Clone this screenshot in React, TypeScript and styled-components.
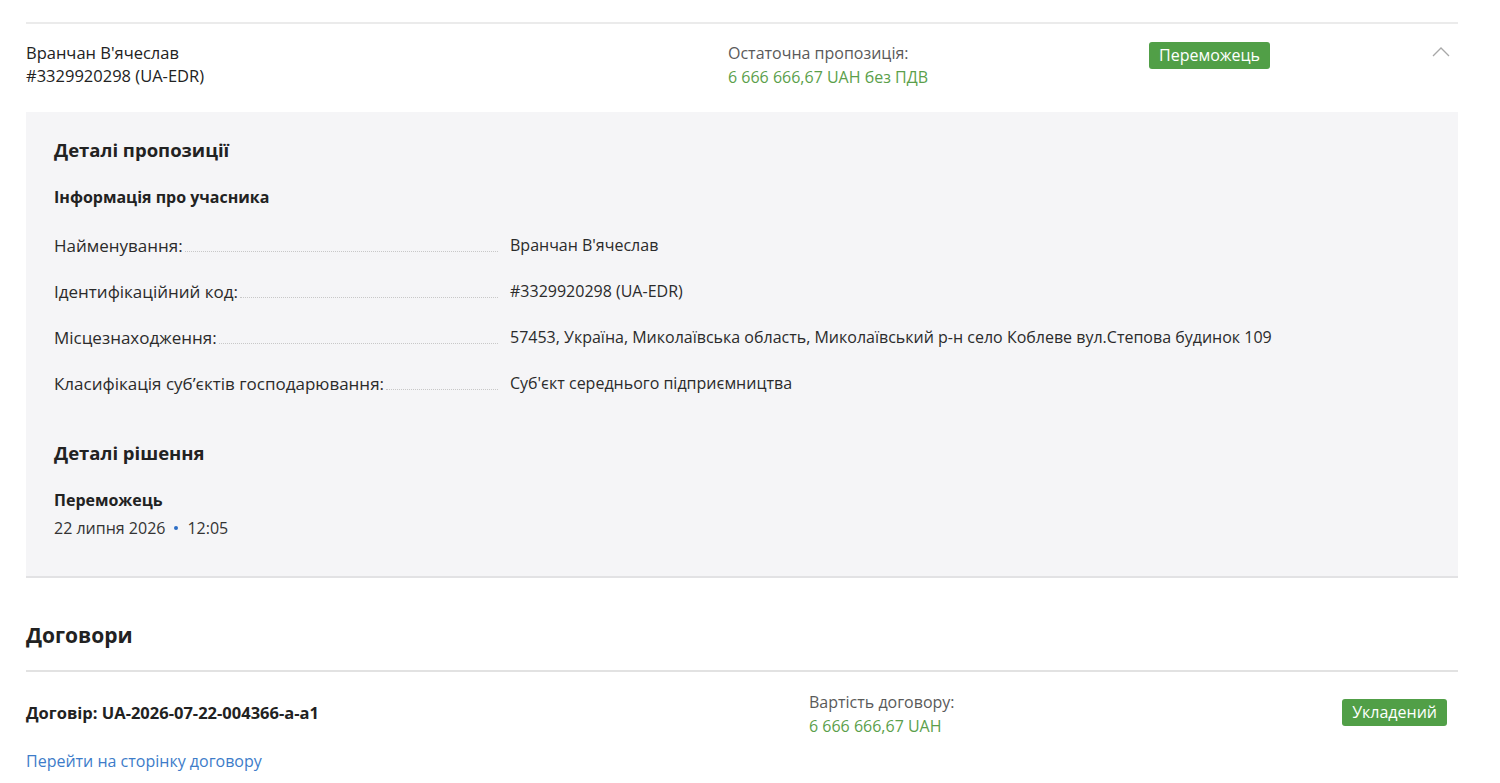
import styled, { createGlobalStyle } from "styled-components";

const GlobalStyle = createGlobalStyle`
  body {
    margin: 0;
    background: #fff;
    font-family: "Open Sans", "Noto Sans", sans-serif;
    color: #2b2b2b;
  }
`;

const Page = styled.div`
  padding: 22px 42px 0 26px;
`;

const BidCard = styled.section`
  border-top: 2px solid #ebebeb;
`;

const BidHeader = styled.div`
  display: grid;
  grid-template-columns: 702px 421px 1fr 30px;
  box-sizing: border-box;
  height: 88px;
  padding-top: 17px;
`;

const Name = styled.div`
  font-size: 16.5px;
  line-height: 23px;
  color: #222;
`;

const Narrow = styled.div<{ $green?: boolean }>`
  font-size: 16px;
  line-height: 24px;
  color: ${(p) => (p.$green ? "#5b9f4b" : "#5a5a5a")};
`;

const Badge = styled.span<{ $top?: number }>`
  display: inline-block;
  align-self: start;
  justify-self: start;
  background: #519f47;
  color: #fff;
  font-size: 16px;
  line-height: 27px;
  padding: 0 10px;
  border-radius: 3px;
  margin-top: ${(p) => p.$top ?? 0}px;
`;

const Chevron = styled.svg`
  justify-self: end;
  margin: 6px 8px 0 0;
`;

const Details = styled.div`
  background: #f5f5f7;
  border-bottom: 2px solid #e2e2e4;
  padding: 26px 28px 37px;
`;

const H2 = styled.h2<{ $top?: number }>`
  margin: ${(p) => p.$top ?? 0}px 0 0;
  font-size: 18.5px;
  line-height: 24px;
  font-weight: 700;
  color: #222;
`;

const H3 = styled.h3<{ $top?: number }>`
  margin: ${(p) => p.$top ?? 0}px 0 0;
  font-size: 16px;
  line-height: 22px;
  font-weight: 700;
  color: #222;
`;

const InfoList = styled.div`
  margin-top: 14px;
  display: flex;
  flex-direction: column;
`;

const InfoRow = styled.div`
  display: grid;
  grid-template-columns: 446px 1fr;
  height: 46px;
  align-items: center;
  font-size: 17px;
`;

const Label = styled.div`
  display: flex;
  align-items: baseline;
  color: #2b2b2b;
  &::after {
    content: "";
    flex: 1;
    border-bottom: 1px dotted #c8c8c8;
    margin: 0 2px;
  }
`;

const Value = styled(Narrow)`
  padding-left: 10px;
  color: #2b2b2b;
`;

const DateLine = styled.div`
  margin-top: 6px;
  font-size: 16px;
  color: #333;
  display: flex;
  align-items: center;
  gap: 9px;
`;

const Dot = styled.span`
  width: 4px;
  height: 4px;
  border-radius: 50%;
  background: #2d6ec6;
`;

const ContractsTitle = styled.h2`
  margin: 43px 0 0;
  font-size: 21px;
  line-height: 28px;
  font-weight: 700;
  color: #222;
  padding-bottom: 21px;
  border-bottom: 2px solid #e2e2e2;
`;

const ContractRow = styled.div`
  display: grid;
  grid-template-columns: 783px 1fr auto;
  padding: 18px 11px 0 0;
`;

const ContractId = styled.div`
  font-size: 16.5px;
  font-weight: 700;
  color: #222;
  padding-top: 11px;
`;

const Link = styled.a`
  display: block;
  margin-top: 12px;
  font-size: 16px;
  color: #3d7cc9;
  text-decoration: none;
`;

export default function App() {
  return (
    <Page>
      <GlobalStyle />
      <BidCard>
        <BidHeader>
          <div>
            <Name>Вранчан В'ячеслав</Name>
            <Name>#3329920298 (UA-EDR)</Name>
          </div>
          <div>
            <Narrow>Остаточна пропозиція:</Narrow>
            <Narrow $green>6 666 666,67 UAH без ПДВ</Narrow>
          </div>
          <Badge $top={1}>Переможець</Badge>
          <Chevron width="18" height="10" viewBox="0 0 18 10">
            <path d="M1 9 L9 1 L17 9" fill="none" stroke="#a8a8a8" strokeWidth="1.3" />
          </Chevron>
        </BidHeader>
        <Details>
          <H2>Деталі пропозиції</H2>
          <H3 $top={24}>Інформація про учасника</H3>
          <InfoList>
            <InfoRow>
              <Label>Найменування:</Label>
              <Value>Вранчан В'ячеслав</Value>
            </InfoRow>
            <InfoRow>
              <Label>Ідентифікаційний код:</Label>
              <Value>#3329920298 (UA-EDR)</Value>
            </InfoRow>
            <InfoRow>
              <Label>Місцезнаходження:</Label>
              <Value>
                57453, Україна, Миколаївська область, Миколаївський р-н село Коблеве вул.Степова будинок 109
              </Value>
            </InfoRow>
            <InfoRow>
              <Label>Класифікація суб’єктів господарювання:</Label>
              <Value>Суб'єкт середнього підприємництва</Value>
            </InfoRow>
          </InfoList>
          <H2 $top={35}>Деталі рішення</H2>
          <H3 $top={24}>Переможець</H3>
          <DateLine>
            22 липня 2026 <Dot /> 12:05
          </DateLine>
        </Details>
      </BidCard>

      <ContractsTitle>Договори</ContractsTitle>
      <ContractRow>
        <ContractId>Договір: UA-2026-07-22-004366-a-a1</ContractId>
        <div>
          <Narrow>Вартість договору:</Narrow>
          <Narrow $green>6 666 666,67 UAH</Narrow>
        </div>
        <Badge $top={9}>Укладений</Badge>
      </ContractRow>
      <Link href="#">Перейти на сторінку договору</Link>
    </Page>
  );
}
